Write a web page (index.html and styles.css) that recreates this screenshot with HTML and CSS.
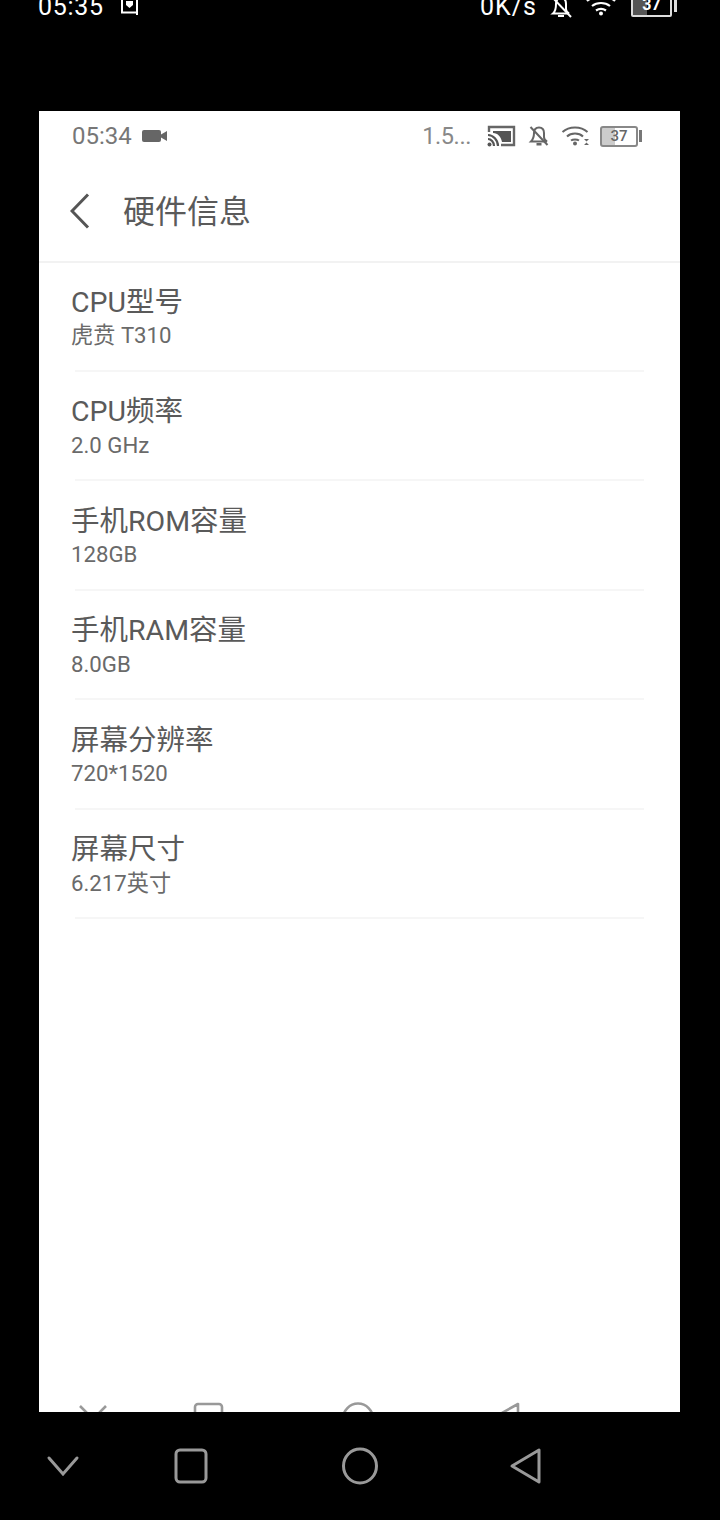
FILE: index.html
```html
<!DOCTYPE html>
<html>
<head>
<meta charset="utf-8">
<title>硬件信息</title>
<link rel="stylesheet" href="styles.css">
</head>
<body>
<div class="top-bar">
	<div class="top-left">
		<span class="top-time">05:35</span>
		<svg class="top-shot" width="20" height="18" viewBox="0 0 20 18"><path d="M2 0V14.500H17V0M17 14.500V17" fill="none" stroke="#fff" stroke-width="2"/><path d="M6 3H13V7L9.500 10L6 7Z" fill="#fff"/></svg>
	</div>
	<div class="top-right">
		<span class="top-speed">0K/s</span>
		<svg class="top-bell" width="24" height="20" viewBox="0 0 24 20"><path d="M3 15.500C6 13 6 10 6 6C6 2 8 0 11 0C14 0 16 2 16 6V11C16 13 17 14.500 19 15.500Z" fill="none" stroke="#fff" stroke-width="2"/><path d="M2 -1L21 19" stroke="#fff" stroke-width="2"/><path d="M8 17H14V19H8Z" fill="#fff"/></svg>
		<svg class="top-wifi" width="32" height="18" viewBox="0 0 32 18"><path d="M2 3C9 -3 23 -3 30 3M7 8C12 4 20 4 25 8M11 12.500C14 10.500 18 10.500 21 12.500" fill="none" stroke="#fff" stroke-width="2.200"/><circle cx="16" cy="15.500" r="2" fill="#fff"/></svg>
		<div class="top-battery"><span class="top-level">37</span></div>
		<span class="top-cap"></span>
	</div>
</div>

<div class="shot">
	<div class="status">
		<div class="status-left">
			<span class="status-time">05:34</span>
			<svg width="26" height="14" viewBox="0 0 26 14"><rect x="0" y="1" width="19" height="12" rx="2" fill="#666"/><path d="M19 5.500L25 2V12L19 8.500Z" fill="#666"/></svg>
		</div>
		<div class="status-right">
			<span class="status-speed">1.5...</span>
			<svg class="cast" width="29" height="22" viewBox="0 0 29 22"><path d="M2 7V2H27V20H14" fill="none" stroke="#666" stroke-width="2.400"/><path d="M6 6H24V17H15C14 12 11 8 6 8Z" fill="#555"/><path d="M1 10C6 10 11 15 11 21M1 14C4 14 7 17 7 21" fill="none" stroke="#555" stroke-width="2.200"/><circle cx="2.500" cy="19.500" r="2" fill="#555"/></svg>
			<svg class="bell" width="22" height="20" viewBox="0 0 22 20"><path d="M3 15.500C5 13.500 6 11 6 7C6 3.500 8 1.500 11 1.500C14 1.500 16 3.500 16 7V11C16 13 17 14.500 19 15.500Z" fill="none" stroke="#666" stroke-width="2"/><path d="M2.500 1L19.500 19" stroke="#666" stroke-width="2"/><path d="M8.500 17H13.500V19.500H8.500Z" fill="#666"/></svg>
			<svg class="wifi" width="30" height="20" viewBox="0 0 30 20"><path d="M1.500 6C8 0 20 0 26.500 6M6 10.500C10 6.500 18 6.500 22 10.500M10 14.500C12 13 16 13 18 14.500" fill="none" stroke="#666" stroke-width="2"/><circle cx="14" cy="17.500" r="2" fill="#666"/><path d="M23 13H28L25.500 15.500ZM23 19H28L25.500 16.500Z" fill="#666"/></svg>
			<div class="battery"><span class="level">37</span></div>
			<span class="battery-cap"></span>
		</div>
	</div>

	<div class="title-bar">
		<svg class="back" width="20" height="36" viewBox="0 0 20 36"><path d="M18 1.500L2 18L18 34.500" fill="none" stroke="#555" stroke-width="3"/></svg>
		<span class="title">硬件信息</span>
	</div>

	<div class="list">
		<div class="row">
			<div class="row-name">CPU型号</div>
			<div class="row-value">虎贲 T310</div>
		</div>
		<div class="row">
			<div class="row-name">CPU频率</div>
			<div class="row-value">2.0 GHz</div>
		</div>
		<div class="row">
			<div class="row-name">手机ROM容量</div>
			<div class="row-value">128GB</div>
		</div>
		<div class="row">
			<div class="row-name">手机RAM容量</div>
			<div class="row-value">8.0GB</div>
		</div>
		<div class="row">
			<div class="row-name">屏幕分辨率</div>
			<div class="row-value">720*1520</div>
		</div>
		<div class="row">
			<div class="row-name">屏幕尺寸</div>
			<div class="row-value">6.217英寸</div>
		</div>
	</div>

	<div class="inner-nav">
		<svg class="inner-down" width="30" height="20" viewBox="0 0 30 20"><path d="M2 4L15 17L28 4" fill="none" stroke="#999" stroke-width="2.600"/></svg>
		<svg class="inner-square" width="32" height="32" viewBox="0 0 32 32"><rect x="2" y="2" width="27" height="27" rx="3" fill="none" stroke="#999" stroke-width="2.600"/></svg>
		<svg class="inner-circle" width="34" height="32" viewBox="0 0 34 32"><ellipse cx="17" cy="17" rx="15" ry="15.500" fill="none" stroke="#999" stroke-width="2.600"/></svg>
		<svg class="inner-back" width="30" height="32" viewBox="0 0 30 32"><path d="M27 2V30L2 16Z" fill="none" stroke="#999" stroke-width="2.600" stroke-linejoin="round"/></svg>
	</div>
</div>

<div class="nav">
	<svg class="nav-down" width="34" height="24" viewBox="0 0 34 24"><path d="M3 4L17 20L31 4" fill="none" stroke="#999" stroke-width="3" stroke-linecap="round"/></svg>
	<svg class="nav-square" width="34" height="36" viewBox="0 0 34 36"><rect x="2" y="2" width="30" height="32" rx="4" fill="none" stroke="#999" stroke-width="3"/></svg>
	<svg class="nav-circle" width="38" height="38" viewBox="0 0 38 38"><ellipse cx="19" cy="19" rx="16.500" ry="17" fill="none" stroke="#999" stroke-width="3"/></svg>
	<svg class="nav-back" width="34" height="38" viewBox="0 0 34 38"><path d="M30 3V35L3 19Z" fill="none" stroke="#999" stroke-width="3" stroke-linejoin="round"/></svg>
</div>
</body>
</html>
```

FILE: styles.css
```css
* {
	box-sizing: border-box;
}
html, body {
	margin: 0;
	padding: 0;
	background: #000;
}
body {
	width: 720px;
	height: 1520px;
	overflow: hidden;
	font-family: "Roboto", "Noto Sans CJK SC", sans-serif;
}
svg {
	display: block;
	flex: none;
}
.top-bar {
	display: flex;
	justify-content: space-between;
	align-items: flex-end;
	height: 19px;
	overflow: hidden;
	color: #fff;
	margin-bottom: 92px;
}
.top-left, .top-right {
	display: flex;
	align-items: flex-end;
}
.top-left {
	padding-left: 38px;
}
.top-time {
	font-size: 25px;
	line-height: 24px;
	letter-spacing: 0.7px;
}
.top-shot {
	margin-left: 16px;
	margin-bottom: 3px;
}
.top-right {
	padding-right: 43px;
}
.top-speed {
	font-size: 25px;
	line-height: 24px;
	letter-spacing: 1px;
}
.top-bell {
	margin-left: 13px;
	margin-bottom: 1px;
}
.top-wifi {
	margin-left: 11px;
	margin-bottom: 3px;
}
.top-battery {
	width: 41px;
	height: 24px;
	margin-left: 14px;
	margin-bottom: 2px;
	border: 2px solid #ddd;
	border-radius: 2px;
	background: linear-gradient(to right, #555 37%, #000 37%);
	text-align: center;
}
.top-level {
	display: block;
	font-size: 16px;
	font-weight: 700;
	line-height: 20px;
}
.top-cap {
	width: 3px;
	height: 12px;
	margin-left: 2px;
	margin-bottom: 7px;
	background: #ddd;
}
.shot {
	width: 641px;
	height: 1301px;
	margin-left: 39px;
	background: #fff;
	overflow: hidden;
	color: #555;
}
.status {
	display: flex;
	justify-content: space-between;
	align-items: center;
	height: 50px;
	padding: 0 38px 0 33px;
}
.status-left, .status-right {
	display: flex;
	align-items: center;
}
.status-time {
	font-size: 24px;
	color: #777;
	margin-right: 10px;
}
.status-speed {
	font-size: 23.5px;
	color: #888;
	letter-spacing: -0.4px;
	margin-right: 16px;
}
.cast {
	margin-left: 0;
}
.bell {
	margin-left: 12px;
}
.wifi {
	margin-left: 11px;
}
.battery {
	width: 38px;
	height: 21px;
	margin-left: 9px;
	border: 2px solid #888;
	border-radius: 3px;
	background: linear-gradient(to right, #ccc 37%, #fff 37%);
	text-align: center;
}
.level {
	display: block;
	font-size: 15px;
	font-weight: 500;
	line-height: 17px;
	color: #666;
}
.battery-cap {
	width: 3px;
	height: 12px;
	margin-left: 1px;
	background: #777;
}
.title-bar {
	display: flex;
	align-items: center;
	height: 102px;
	padding-left: 31px;
	border-bottom: 2px solid #f2f2f2;
}
.title {
	font-size: 32px;
	line-height: 44px;
	margin-left: 33px;
	padding-top: 2px;
	color: #5a5a5a;
}
.row {
	display: flex;
	flex-direction: column;
	height: 109.5px;
	padding: 20.5px 0 1px 32px;
}
.row:after {
	content: "";
	display: block;
	height: 2px;
	background: #f6f6f6;
	margin: auto 36px 0 4px;
}
.row-name {
	font-size: 28.5px;
	line-height: 38px;
	color: #5a5a5a;
}
.row-value {
	font-size: 22.2px;
	line-height: 30px;
	margin-top: -1.5px;
	color: #6a6a6a;
}
.inner-nav {
	display: flex;
	margin-top: 482px;
	padding-left: 39px;
}
.inner-down {
	margin-right: 85px;
}
.inner-square {
	margin-right: 116px;
}
.inner-circle {
	margin-right: 116px;
}
.nav {
	display: flex;
	align-items: center;
	height: 108px;
	padding: 0 0 0 46px;
}
.nav-down {
	margin-right: 94px;
}
.nav-square {
	margin-right: 133px;
}
.nav-circle {
	margin-right: 130px;
}
```
